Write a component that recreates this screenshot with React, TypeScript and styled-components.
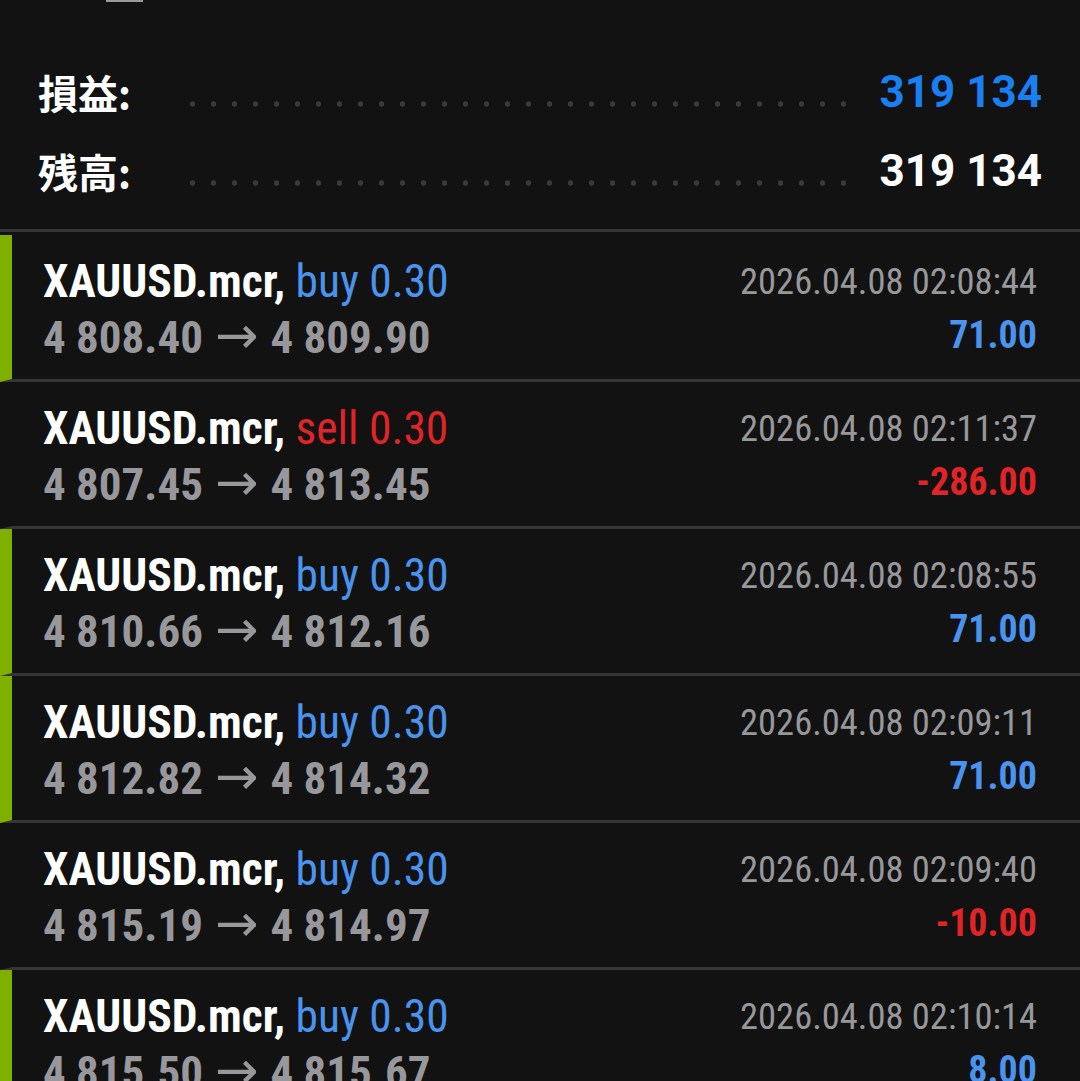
import styled, { createGlobalStyle } from 'styled-components'

const GlobalStyle = createGlobalStyle`
  *, *::before, *::after {
    box-sizing: border-box;
  }
  html, body {
    margin: 0;
    padding: 0;
    background: #121212;
  }
  body {
    width: 1080px;
    height: 1081px;
    overflow: hidden;
    font-family: "Roboto Condensed", "Liberation Sans Narrow", Roboto, sans-serif;
  }
`

const Page = styled.div`
  width: 1080px;
  height: 1081px;
  overflow: hidden;
  background: #121212;
  display: flex;
  flex-direction: column;
`

const TopEdge = styled.div`
  height: 2px;
  flex-shrink: 0;
  display: flex;
  padding-left: 106px;
`

const EdgeMark = styled.div`
  width: 37px;
  height: 2px;
  background: #9a9a9a;
`

const Summary = styled.section`
  flex-shrink: 0;
  padding: 50px 38px 19px 38px;
  border-bottom: 3px solid #363636;
  margin-bottom: 3px;
`

const SummaryRow = styled.div`
  height: 79px;
  display: flex;
  align-items: center;
`

const Label = styled.div`
  font-family: "Noto Sans CJK JP", "Noto Sans CJK SC", sans-serif;
  font-weight: 700;
  font-size: 40px;
  color: #ffffff;
  width: 110px;
`

const Leader = styled.div`
  flex: 1;
  height: 6px;
  margin: 24px 34px 0 34px;
  background-image: radial-gradient(circle, #3a3a3a 2.4px, transparent 3px);
  background-size: 21px 6px;
  background-repeat: repeat-x;
`

const Amount = styled.div<{ $color: string }>`
  font-family: Roboto, "Liberation Sans", sans-serif;
  font-weight: 700;
  font-size: 44px;
  color: ${p => p.$color};
`

const Trade = styled.div<{ $profit: boolean }>`
  height: 147px;
  flex-shrink: 0;
  border-left: 12px solid ${p => (p.$profit ? '#7fb000' : 'transparent')};
  border-bottom: 3px solid #363636;
  padding: 20px 43px 0 31px;
  display: flex;
  justify-content: space-between;
`

const Col = styled.div<{ $right?: boolean }>`
  display: flex;
  flex-direction: column;
  align-items: ${p => (p.$right ? 'flex-end' : 'flex-start')};
`

const Title = styled.div`
  height: 54px;
  line-height: 54px;
  font-size: 45.5px;
  font-weight: 700;
  color: #ffffff;
  white-space: nowrap;
`

const Side = styled.span<{ $sell: boolean }>`
  font-weight: 400;
  color: ${p => (p.$sell ? '#e02427' : '#4a93ee')};
`

const Prices = styled.div`
  height: 53px;
  line-height: 53px;
  font-size: 45px;
  font-weight: 700;
  color: #98989c;
  white-space: nowrap;
`

const Arrow = styled.span`
  font-family: "DejaVu Sans", sans-serif;
  font-weight: 400;
  font-size: 52px;
  margin: 0 12px;
`

const Time = styled.div`
  height: 54px;
  line-height: 54px;
  font-size: 36.5px;
  color: #98989c;
  white-space: nowrap;
`

const Profit = styled.div<{ $loss: boolean }>`
  height: 53px;
  line-height: 53px;
  font-size: 38px;
  font-weight: 700;
  color: ${p => (p.$loss ? '#e02427' : '#4a93ee')};
`

const trades = [
  { side: 'buy', from: '4 808.40', to: '4 809.90', time: '2026.04.08 02:08:44', profit: '71.00' },
  { side: 'sell', from: '4 807.45', to: '4 813.45', time: '2026.04.08 02:11:37', profit: '-286.00' },
  { side: 'buy', from: '4 810.66', to: '4 812.16', time: '2026.04.08 02:08:55', profit: '71.00' },
  { side: 'buy', from: '4 812.82', to: '4 814.32', time: '2026.04.08 02:09:11', profit: '71.00' },
  { side: 'buy', from: '4 815.19', to: '4 814.97', time: '2026.04.08 02:09:40', profit: '-10.00' },
  { side: 'buy', from: '4 815.50', to: '4 815.67', time: '2026.04.08 02:10:14', profit: '8.00' },
]

export default function App(){

  return(

    <Page>

      <GlobalStyle />

      <TopEdge>
        <EdgeMark />
      </TopEdge>

      <Summary>

        <SummaryRow>
          <Label>損益:</Label>
          <Leader />
          <Amount $color='#1a7ff0'>319 134</Amount>
        </SummaryRow>

        <SummaryRow>
          <Label>残高:</Label>
          <Leader />
          <Amount $color='#ffffff'>319 134</Amount>
        </SummaryRow>

      </Summary>

      {trades.map((t, i) => {
        const loss = t.profit.startsWith('-')
        return (
          <Trade key={i} $profit={!loss}>
            <Col>
              <Title>
                XAUUSD.mcr, <Side $sell={t.side === 'sell'}>{t.side} 0.30</Side>
              </Title>
              <Prices>{t.from}<Arrow>→</Arrow>{t.to}</Prices>
            </Col>
            <Col $right>
              <Time>{t.time}</Time>
              <Profit $loss={loss}>{t.profit}</Profit>
            </Col>
          </Trade>
        )
      })}

    </Page>

  )

}
